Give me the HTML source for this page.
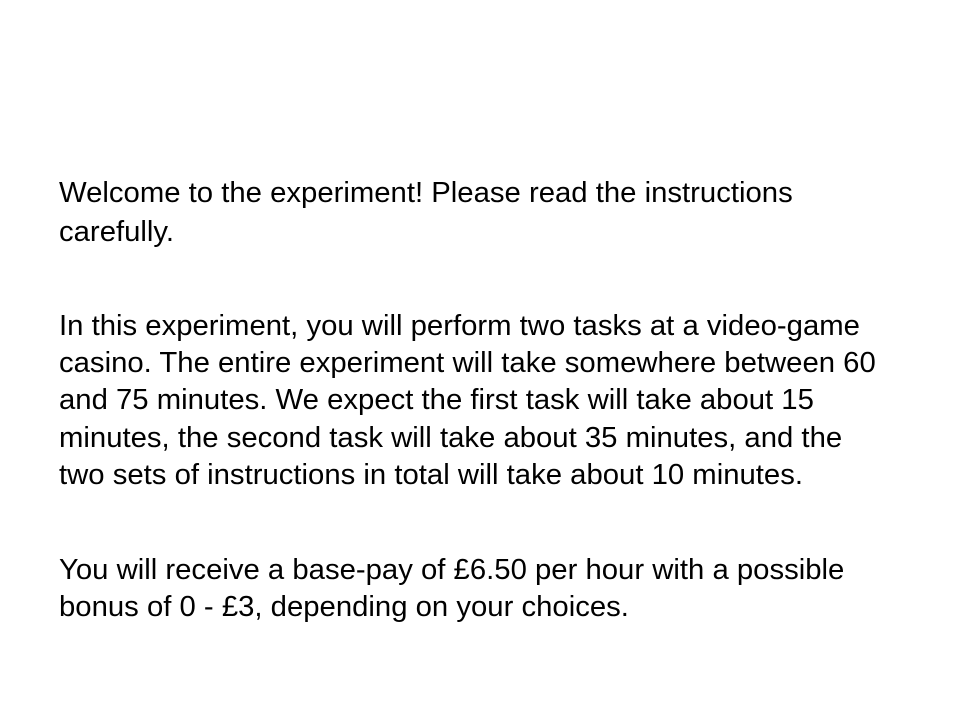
<!DOCTYPE html>
<html><head><meta charset="utf-8"><style>
html,body{margin:0;padding:0;background:#fff;width:960px;height:720px;overflow:hidden}
.l{position:absolute;left:59px;font-family:"Liberation Sans",sans-serif;font-size:29px;line-height:36px;color:#000;white-space:nowrap;transform:scaleX(1.01);transform-origin:left center}
</style></head><body>
<div class="l" style="top:175px">Welcome to the experiment! Please read the instructions</div>
<div class="l" style="top:214px">carefully.</div>
<div class="l" style="top:308px">In this experiment, you will perform two tasks at a video-game</div>
<div class="l" style="top:345px">casino. The entire experiment will take somewhere between 60</div>
<div class="l" style="top:382px">and 75 minutes. We expect the first task will take about 15</div>
<div class="l" style="top:420px">minutes, the second task will take about 35 minutes, and the</div>
<div class="l" style="top:457px">two sets of instructions in total will take about 10 minutes.</div>
<div class="l" style="top:552px">You will receive a base-pay of £6.50 per hour with a possible</div>
<div class="l" style="top:589px">bonus of 0 - £3, depending on your choices.</div>
</body></html>
